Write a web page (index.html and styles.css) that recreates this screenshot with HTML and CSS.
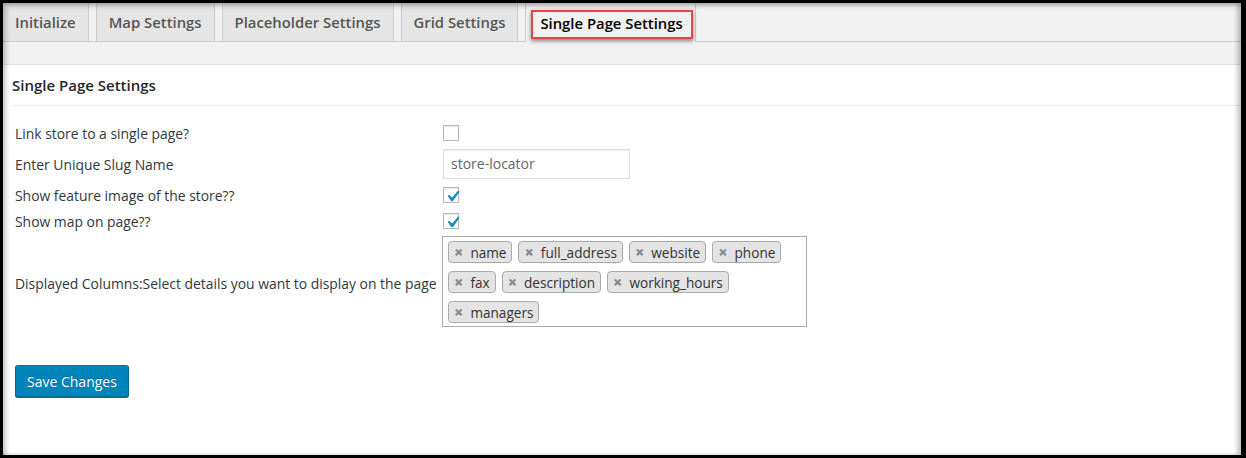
FILE: index.html
```html
<!DOCTYPE html>
<html>
<head>
<meta charset="utf-8">
<link rel="stylesheet" href="styles.css">
</head>
<body>
<div class="frame">
  <nav class="tabs">
    <a class="tab first">Initialize</a>
    <a class="tab">Map Settings</a>
    <a class="tab">Placeholder Settings</a>
    <a class="tab">Grid Settings</a>
    <a class="tab active">Single Page Settings<span class="mark"></span></a>
  </nav>
  <div class="band"></div>
  <div class="panel">
    <h2 class="panel-title">Single Page Settings</h2>
    <div class="form">
      <div class="row r-check">
        <span class="label">Link store to a single page?</span>
        <span class="checkbox"></span>
      </div>
      <div class="row r-input">
        <span class="label">Enter Unique Slug Name</span>
        <span class="input">store-locator</span>
      </div>
      <div class="row r-check">
        <span class="label">Show feature image of the store??</span>
        <span class="checkbox checked"><svg viewBox="0 0 20 20" width="23" height="23"><path d="M14.83 4.89l1.34.94-5.81 8.38H9.02L5.78 9.67l1.34-1.25 2.57 2.4z" fill="#1e8cbe"/></svg></span>
      </div>
      <div class="row r-check">
        <span class="label">Show map on page??</span>
        <span class="checkbox checked"><svg viewBox="0 0 20 20" width="23" height="23"><path d="M14.83 4.89l1.34.94-5.81 8.38H9.02L5.78 9.67l1.34-1.25 2.57 2.4z" fill="#1e8cbe"/></svg></span>
      </div>
      <div class="row r-select">
        <span class="label">Displayed Columns:Select details you want to display on the page</span>
        <div class="select">
          <div class="chip-row">
            <span class="chip"><b>×</b>name</span>
            <span class="chip"><b>×</b>full_address</span>
            <span class="chip"><b>×</b>website</span>
            <span class="chip"><b>×</b>phone</span>
          </div>
          <div class="chip-row">
            <span class="chip"><b>×</b>fax</span>
            <span class="chip"><b>×</b>description</span>
            <span class="chip"><b>×</b>working_hours</span>
          </div>
          <div class="chip-row">
            <span class="chip"><b>×</b>managers</span>
          </div>
        </div>
      </div>
    </div>
    <button class="btn">Save Changes</button>
  </div>
</div>
</body>
</html>
```

FILE: styles.css
```css
html, body {
  margin: 0;
  padding: 0;
  background: #000;
}
body {
  font-family: "Open Sans", "Noto Sans", sans-serif;
  font-size: 14px;
  color: #32373c;
}
.frame {
  position: relative;
  box-sizing: border-box;
  width: 1246px;
  height: 458px;
  border: 3px solid #000;
  border-right-width: 5px;
  background: #fff;
  overflow: hidden;
}
.frame::after {
  content: "";
  position: absolute;
  inset: 0;
  pointer-events: none;
  box-shadow: inset 3px 3px 4px rgba(0,0,0,0.22), inset -4px 0 4px rgba(0,0,0,0.22);
}
.tabs {
  display: flex;
  gap: 7px;
  height: 38px;
  background: #f1f1f1;
  border-bottom: 1px solid #ccc;
}
.tab {
  display: flex;
  align-items: center;
  padding: 0 12px;
  background: #e5e5e5;
  border-left: 1px solid #ccc;
  border-right: 1px solid #ccc;
  font-size: 14.85px;
  font-weight: 600;
  color: #555;
  position: relative;
}
.tab.first {
  border-left: 0;
}
.tab.active {
  background: #f1f1f1;
  color: #000;
  margin-bottom: -1px;
  padding: 0 12px 0 14px;
}
.mark {
  position: absolute;
  left: 5px;
  right: 2px;
  top: 7px;
  bottom: 3px;
  border: 2px solid #e84444;
  box-shadow: 0 2px 4px rgba(0,0,0,0.45);
}
.band {
  height: 22px;
  background: #f1f1f1;
  border-bottom: 1px solid #e2e2e2;
}
.panel {
  padding: 0 0 0 12px;
}
.panel-title {
  margin: 0 0 0 -3px;
  height: 40px;
  line-height: 40px;
  font-size: 15px;
  font-weight: 600;
  color: #23282d;
  border-bottom: 1px solid #eee;
}
.form {
  padding-top: 14px;
}
.row {
  box-sizing: border-box;
  display: grid;
  grid-template-columns: 428px auto;
  align-items: center;
  justify-items: start;
}
.label {
  font-size: 13.9px;
  line-height: 20px;
  padding-top: 1px;
}
.r-check { height: 26px; }
.r-input { height: 36px; }
.r-select { height: 95px; }
.r-select .label { padding-top: 4px; }
.checkbox {
  position: relative;
  display: block;
  box-sizing: border-box;
  width: 16px;
  height: 16px;
  border: 1px solid #b4b9be;
  background: #fff;
  box-shadow: inset 0 1px 2px rgba(0,0,0,0.1);
}
.checkbox svg {
  position: absolute;
  left: -3px;
  top: -3px;
}
.input {
  box-sizing: border-box;
  display: block;
  width: 187px;
  height: 30px;
  line-height: 28px;
  padding: 0 7px;
  border: 1px solid #ddd;
  box-shadow: inset 0 1px 2px rgba(0,0,0,0.07);
  color: #666;
  font-size: 14px;
}
.select {
  box-sizing: border-box;
  width: 365px;
  margin-left: -1px;
  padding: 4px 5px 3px;
  border: 1px solid #aaa;
  display: flex;
  flex-direction: column;
  gap: 8px;
}
.chip-row {
  display: flex;
  gap: 6px;
}
.chip {
  box-sizing: border-box;
  height: 22px;
  display: flex;
  align-items: center;
  padding: 0 5px;
  border: 1px solid #aaa;
  border-radius: 4px;
  background: #e4e4e4;
  color: #333;
  font-size: 13.6px;
}
.chip b {
  color: #888;
  font-weight: 800;
  margin-right: 7px;
  font-size: 16px;
  line-height: 16px;
}
.btn {
  display: block;
  margin-top: 36px;
  box-sizing: border-box;
  height: 32px;
  padding: 0 11px;
  background: #0085ba;
  border: 1px solid #0073aa;
  border-color: #0073aa #006799 #006799;
  border-radius: 3px;
  box-shadow: 0 1px 0 #006799;
  color: #fff;
  font-family: inherit;
  font-size: 14px;
  text-shadow: 0 -1px 1px #006799;
}
```
